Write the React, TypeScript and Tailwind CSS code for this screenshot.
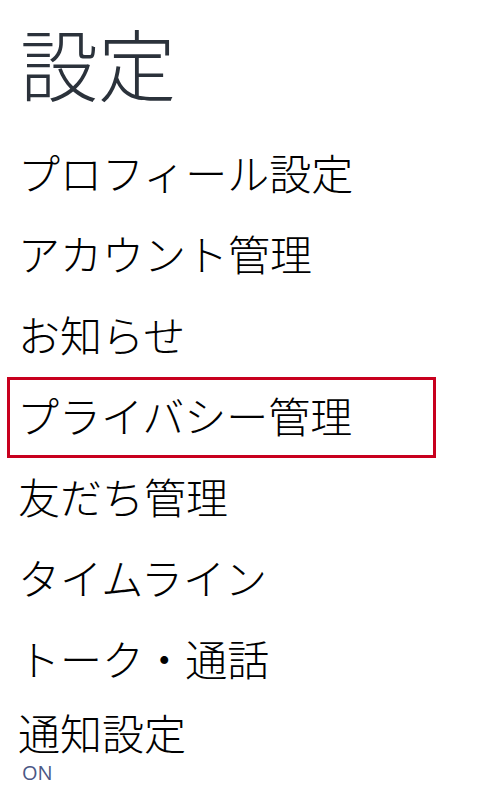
const items = [
  "プロフィール設定",
  "アカウント管理",
  "お知らせ",
  "プライバシー管理",
  "友だち管理",
  "タイムライン",
  "トーク・通話",
];

export default function App() {
  return (
    <div
      className="w-[480px] h-[800px] overflow-hidden bg-white"
      style={{ fontFamily: '"Noto Sans CJK JP", "Noto Sans", sans-serif' }}
    >
      <h1 className="pl-[20px] pt-[12px] text-[78px] leading-[100px] font-light text-[#2b323b]">
        設定
      </h1>
      <ul className="mt-[22px] w-[429px] ml-[7px]">
        {items.map((label, i) => (
          <li
            key={label}
            className={
              i === 3
                ? "h-[81px] flex items-center pl-[7px] pb-[6px] border-[3px] border-[#c8001e] text-[42px] font-light text-black"
                : "h-[81px] flex items-center pl-[11px] pb-[6px] text-[42px] font-light text-black"
            }
          >
            {label}
          </li>
        ))}
        <li className="pl-[11px] pt-[1px] flex flex-col">
          <span className="text-[42px] leading-[60px] font-light text-black">通知設定</span>
          <span
            className="mt-[1px] pl-[4px] text-[20px] leading-[20px] text-[#4b5785]"
            style={{ fontFamily: '"Open Sans", sans-serif' }}
          >
            ON
          </span>
        </li>
      </ul>
    </div>
  );
}
